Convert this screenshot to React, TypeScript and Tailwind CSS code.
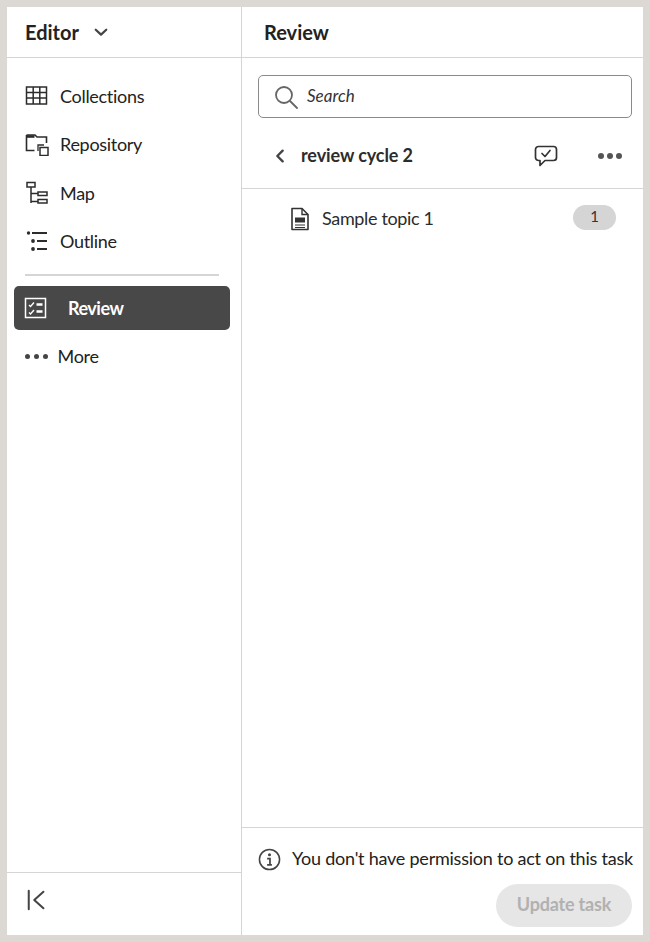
import React from 'react';

const font = { fontFamily: 'Lato, "Noto Sans", sans-serif' };

function Icon({ children, className = '' }: { children: React.ReactNode; className?: string }) {
  return (
    <svg viewBox="0 0 24 24" fill="none" stroke="currentColor" className={className}>
      {children}
    </svg>
  );
}

function NavItem({ icon, label, className = '' }: { icon: React.ReactNode; label: string; className?: string }) {
  return (
    <div className={`flex h-[48px] items-center pl-[18px] text-[#2c2c2c] ${className}`}>
      <span className="flex w-[35px] shrink-0">{icon}</span>
      <span className="text-[18px] leading-[24px] tracking-[-0.3px] text-[#222]">{label}</span>
    </div>
  );
}

export default function App() {
  return (
    <div
      className="box-border flex h-[942px] w-[650px] bg-[#dcd9d5] p-[7px]"
      style={font}
    >
      <div className="flex h-[928px] w-[636px] bg-white">
        <aside className="flex w-[235px] shrink-0 flex-col border-r border-[#d5d5d5]">
          <div className="flex h-[51px] shrink-0 items-center gap-[13px] border-b border-[#d5d5d5] pl-[18px]">
            <span className="text-[20px] font-bold text-[#222]">Editor</span>
            <Icon className="h-[18px] w-[18px] text-[#444]">
              <path d="M5 9l7 6.500L19 9" strokeWidth="3" strokeLinecap="round" strokeLinejoin="round" />
            </Icon>
          </div>
          <nav className="flex flex-1 flex-col pt-[14px]">
            <NavItem
              label="Collections"
              icon={
                <Icon className="h-[24px] w-[24px]">
                  <path d="M1.500 3h20v17h-20zM1.500 8.500h20M1.500 14h20M8.200 3v17M14.800 3v17" strokeWidth="1.500" />
                </Icon>
              }
            />
            <NavItem
              label="Repository"
              className="mb-[1px]"
              icon={
                <Icon className="h-[24px] w-[24px]">
                  <path d="M1.500 3h8.500l2 2h9.500v6M1.500 3v15.500h8" strokeWidth="1.600" />
                  <path d="M1.500 4.500h8" strokeWidth="2.600" />
                  <path d="M13 19v-6h6" strokeWidth="1.300" />
                  <rect x="15" y="15.500" width="8" height="8" strokeWidth="1.500" />
                </Icon>
              }
            />
            <NavItem
              label="Map"
              icon={
                <Icon className="h-[24px] w-[24px]">
                  <rect x="2" y="1.500" width="8" height="4.500" strokeWidth="1.500" />
                  <path d="M6 6v16M6 12.500h7M6 20.500h7" strokeWidth="1.500" />
                  <rect x="13" y="11" width="9" height="3.500" strokeWidth="1.500" />
                  <rect x="13" y="18.500" width="9" height="3.500" strokeWidth="1.500" />
                </Icon>
              }
            />
            <NavItem
              label="Outline"
              icon={
                <Icon className="h-[24px] w-[24px]">
                  <circle cx="3.500" cy="4" r="1.700" fill="currentColor" stroke="none" />
                  <circle cx="8" cy="12" r="1.900" fill="currentColor" stroke="none" />
                  <circle cx="8" cy="20" r="1.900" fill="currentColor" stroke="none" />
                  <path d="M7 4h15M12 12h10M12 20h10" strokeWidth="2.200" />
                </Icon>
              }
            />
            <div className="ml-[18px] mr-[22px] mt-[9px] h-[2px] bg-[#d5d5d5]" />
            <div className="ml-[7px] mr-[11px] mt-[10px] flex h-[44px] items-center rounded-[5px] bg-[#484848] pl-[10px] text-white">
              <Icon className="h-[24px] w-[24px] shrink-0">
                <rect x="1.500" y="2.500" width="20" height="19" strokeWidth="1.500" />
                <path d="M5 9l1.500 1.500L10 6.500M5 16.500L6.500 18l3.500-4" strokeWidth="1.400" />
                <path d="M12.500 8.500h6M12.500 15.500h6" strokeWidth="2.400" />
              </Icon>
              <span className="ml-[20px] pt-[1px] text-[18px] font-bold tracking-[-0.5px]">Review</span>
            </div>
            <div className="flex h-[52px] items-center pl-[18px] text-[#444]">
              <span className="flex w-[32.500px] gap-[4px]">
                <span className="h-[5px] w-[5px] rounded-full bg-[#444]" />
                <span className="h-[5px] w-[5px] rounded-full bg-[#444]" />
                <span className="h-[5px] w-[5px] rounded-full bg-[#444]" />
              </span>
              <span className="pt-[1px] text-[18px] tracking-[-0.3px] text-[#222]">More</span>
            </div>
          </nav>
          <div className="flex h-[63px] shrink-0 items-start border-t border-[#d5d5d5] pl-[19px] pt-[16px]">
            <Icon className="h-[22px] w-[22px] text-[#444]">
              <path d="M3 2v20" strokeWidth="2.200" strokeLinecap="round" />
              <path d="M19 3L9 12l10 9" strokeWidth="2.200" strokeLinecap="round" strokeLinejoin="round" />
            </Icon>
          </div>
        </aside>
        <main className="flex min-w-0 flex-1 flex-col">
          <div className="flex h-[51px] shrink-0 items-center border-b border-[#d5d5d5] pl-[22px]">
            <span className="text-[20px] font-bold text-[#222]">Review</span>
          </div>
          <div className="pl-[16px] pr-[11px] pt-[17px]">
            <div className="flex h-[43px] items-center rounded-[5px] border border-[#8a8a8a] pl-[15px]">
              <Icon className="h-[24px] w-[24px] text-[#666]">
                <circle cx="10" cy="10" r="8" strokeWidth="1.800" />
                <path d="M16 16l7 7" strokeWidth="1.800" strokeLinecap="round" />
              </Icon>
              <span className="ml-[9px] pb-[2px] text-[17px] italic text-[#333]">Search</span>
            </div>
          </div>
          <div className="flex h-[71px] shrink-0 items-center border-b border-[#d5d5d5] pl-[30px] pr-[21px] pt-[6px]">
            <Icon className="h-[16px] w-[16px] text-[#444]">
              <path d="M16 4l-8 8 8 8" strokeWidth="3.600" strokeLinecap="round" strokeLinejoin="round" />
            </Icon>
            <span className="ml-[13px] pb-[2px] text-[18px] font-bold tracking-[-0.1px] text-[#2c2c2c]">review cycle 2</span>
            <Icon className="ml-auto h-[24px] w-[24px] text-[#333]">
              <path d="M4.500 2.500h15a3 3 0 0 1 3 3v8a3 3 0 0 1-3 3H11l-5 5v-5H4.500a3 3 0 0 1-3-3v-8a3 3 0 0 1 3-3z" strokeWidth="1.700" strokeLinejoin="round" />
              <path d="M8 9.500l3 3 5-6" strokeWidth="1.700" strokeLinecap="round" strokeLinejoin="round" />
            </Icon>
            <span className="ml-[40px] flex gap-[3px]">
              <span className="h-[6px] w-[6px] rounded-full bg-[#555]" />
              <span className="h-[6px] w-[6px] rounded-full bg-[#555]" />
              <span className="h-[6px] w-[6px] rounded-full bg-[#555]" />
            </span>
          </div>
          <div className="flex h-[60px] shrink-0 items-center pl-[46px] pr-[27px]">
            <Icon className="h-[24px] w-[24px] shrink-0 text-[#333]">
              <path d="M4 1.500h10l6 6v15H4z" strokeWidth="1.600" strokeLinejoin="round" />
              <path d="M14 1.500v6h6" strokeWidth="1.400" />
              <rect x="7" y="10.500" width="10" height="5" fill="currentColor" stroke="none" />
              <path d="M7 18h10M7 20.500h10" strokeWidth="1.200" />
            </Icon>
            <span className="ml-[10px] pb-[2px] text-[18px] tracking-[-0.35px] text-[#2c2c2c]">Sample topic 1</span>
            <span className="mb-[3px] ml-auto flex h-[25px] w-[43px] items-center justify-center rounded-full bg-[#d5d5d5] pb-[2px] text-[15px] text-[#4a2a2a]">1</span>
          </div>
          <div className="flex-1" />
          <div className="h-[108px] shrink-0 border-t border-[#d5d5d5]">
            <div className="flex h-[56px] items-center pl-[16px] pt-[6px]">
              <Icon className="h-[23px] w-[23px] shrink-0 text-[#444]">
                <circle cx="12" cy="12" r="10.500" strokeWidth="1.600" />
                <circle cx="12" cy="7" r="1.600" fill="currentColor" stroke="none" />
                <path d="M9.500 11h3v6.500M9.500 17.500h5" strokeWidth="1.800" />
              </Icon>
              <span className="ml-[11px] whitespace-nowrap pb-[2px] text-[18px] tracking-[-0.23px] text-[#222]">You don't have permission to act on this task</span>
            </div>
            <div className="flex justify-end pr-[11px]">
              <span className="flex h-[43px] w-[136px] items-center justify-center rounded-full bg-[#e6e6e6] pb-[2px] text-[18px] font-bold tracking-[-0.2px] text-[#b1b1b1]">Update task</span>
            </div>
          </div>
        </main>
      </div>
    </div>
  );
}
